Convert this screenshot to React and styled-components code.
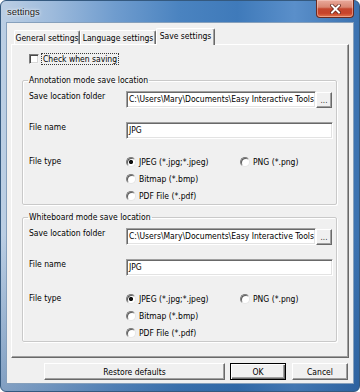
import React from 'react';
import styled, { createGlobalStyle } from 'styled-components';

const UI_FONT = `"DejaVu Sans Condensed", "DejaVu Sans", sans-serif`;

const GlobalStyle = createGlobalStyle`
  html, body {
    margin: 0;
    padding: 0;
    background: #fff;
  }
  body {
    width: 360px;
    height: 392px;
    overflow: hidden;
    font-family: ${UI_FONT};
    font-stretch: condensed;
    font-size: 8.5px;
    color: #000;
  }
`;

// window chrome
const Window = styled.div`
  box-sizing: border-box;
  width: 360px;
  height: 392px;
  display: flex;
  flex-direction: column;
  padding: 0 5px 7px 5px;
  border: 1px solid #34597f;
  border-radius: 6px;
  background:
    linear-gradient(to bottom, rgba(255, 255, 255, 0) 60%, rgba(20, 70, 130, 0.35) 100%),
    linear-gradient(to right, #bccfe4 0%, #9ebbdc 14%, #6f9cce 32%, #4a83c0 50%, #3f7aba 66%, #5a8fca 82%, #3b72b0 100%);
`;

const TitleBar = styled.div`
  height: 21px;
  display: flex;
  align-items: flex-start;
  padding-left: 1px;
`;

const Title = styled.div`
  font-family: "Liberation Sans", Arial, sans-serif;
  font-stretch: normal;
  font-size: 9.5px;
  line-height: 21px;
  color: #1a1a1a;
  text-shadow: 0 0 4px rgba(255, 255, 255, 0.9), 0 0 2px rgba(255, 255, 255, 0.9);
`;

const CloseButton = styled.div`
  box-sizing: border-box;
  margin-left: auto;
  margin-top: -1px;
  width: 38px;
  height: 18px;
  display: flex;
  align-items: center;
  justify-content: center;
  border: 1px solid #6b2a20;
  border-top: none;
  border-radius: 0 0 4px 4px;
  background: linear-gradient(to bottom, #e9aa9c 0%, #d98672 42%, #c4472f 52%, #c8432a 78%, #e2764f 100%);
  box-shadow: inset 0 0 0 1px rgba(255, 220, 210, 0.45);
`;

const Client = styled.div`
  flex: 1;
  display: flex;
  flex-direction: column;
  padding: 5px 4px 3px 4px;
  background: #f0f0f0;
  border: 1px solid #86a0bc;
`;

// tabs
const TabStrip = styled.div`
  height: 16px;
  display: flex;
  align-items: flex-end;
  padding-left: 3px;
`;

const Tab = styled.div`
  box-sizing: border-box;
  width: ${({ $w }) => $w}px;
  height: ${({ $active }) => ($active ? '17px' : '14px')};
  margin-bottom: ${({ $active }) => ($active ? '-1px' : '0')};
  position: relative;
  z-index: ${({ $active }) => ($active ? 2 : 1)};
  display: flex;
  align-items: center;
  justify-content: center;
  padding-bottom: ${({ $active }) => ($active ? '2px' : '0')};
  background: #f0f0f0;
  border: 1px solid #fff;
  border-bottom: none;
  border-right-color: #696969;
  border-radius: 2px 2px 0 0;
  box-shadow: inset -1px 0 0 #a0a0a0;
  white-space: nowrap;
`;

const Panel = styled.div`
  flex: 1;
  display: flex;
  flex-direction: column;
  padding: 8px 1px 0 0;
  background: #f0f0f0;
  border: 1px solid #fff;
  border-right-color: #696969;
  border-bottom-color: #696969;
  box-shadow: inset -1px -1px 0 #a0a0a0;
`;

const CheckRow = styled.label`
  display: flex;
  align-items: center;
  height: 12px;
  margin-left: 17px;
`;

const CheckBox = styled.span`
  box-sizing: border-box;
  width: 10px;
  height: 10px;
  background: #fff;
  border: 1px solid;
  border-color: #7d7d7d #f4f4f4 #f4f4f4 #7d7d7d;
  box-shadow: inset 1px 1px 0 #4a4a4a, inset -1px -1px 0 #d8d8d8;
`;

const FocusLabel = styled.span`
  margin-left: 2px;
  padding: 0 1px;
  line-height: 10px;
  border: 1px dotted #3a3a3a;
`;

// group boxes
const Group = styled.fieldset`
  margin: ${({ $top }) => $top}px 10px 0 10px;
  padding: 5px 3px 2px 6px;
  min-width: 0;
  border: 1px solid #c9c9c9;
  box-shadow: 1px 1px 0 #fff, inset 1px 1px 0 #fff;
  border-radius: 2px;
`;

const Legend = styled.legend`
  padding: 0 1px;
  margin-left: -1px;
  line-height: 11px;
`;

const Row = styled.div`
  display: flex;
  align-items: flex-start;
  margin-top: ${({ $top }) => $top || 0}px;
`;

const Label = styled.div`
  width: 97px;
  flex: none;
  line-height: 11px;
`;

const TextBox = styled.div`
  box-sizing: border-box;
  flex: 1;
  height: 17px;
  padding-left: 2px;
  line-height: 15px;
  white-space: nowrap;
  overflow: hidden;
  background: #fff;
  border: 1px solid;
  border-color: #a0a0a0 #fff #fff #a0a0a0;
  box-shadow: inset 1px 1px 0 #696969, inset -1px -1px 0 #e3e3e3;
`;

const BrowseButton = styled.div`
  box-sizing: border-box;
  width: 16px;
  height: 16px;
  margin-top: 1px;
  margin-right: 1px;
  display: flex;
  align-items: flex-end;
  justify-content: center;
  padding-bottom: 3px;
  font-size: 8px;
  line-height: 6px;
  color: #333;
  background: #f0f0f0;
  border: 1px solid;
  border-color: #fff #696969 #696969 #fff;
  box-shadow: inset -1px -1px 0 #a0a0a0;
`;

const RadioGrid = styled.div`
  display: grid;
  grid-template-columns: 114px auto;
  grid-auto-rows: 12px;
  row-gap: 5px;
`;

const RadioItem = styled.div`
  display: flex;
  align-items: center;
  gap: 3px;
  white-space: nowrap;
  grid-column: ${({ $col }) => $col || 'auto'};
`;

const Radio = styled.span`
  box-sizing: border-box;
  width: 10px;
  height: 10px;
  flex: none;
  border-radius: 50%;
  border: 1px solid;
  border-color: #7a7a7a #e6e6e6 #e6e6e6 #7a7a7a;
  background: radial-gradient(circle at 50% 50%, ${({ $on }) => ($on ? '#111 0, #111 1.8px, #fff 2.4px' : '#fff 0')});
  box-shadow: inset 1px 1px 0 #5c5c5c;
`;

// bottom buttons
const ButtonRow = styled.div`
  display: flex;
  justify-content: flex-end;
  margin-top: 5px;
  padding-right: 1px;
`;

const Button = styled.div`
  box-sizing: border-box;
  width: ${({ $w }) => $w}px;
  height: 17px;
  margin-left: ${({ $gap }) => $gap || 0}px;
  display: flex;
  align-items: center;
  justify-content: center;
  background: #f0f0f0;
  border: 1px solid;
  border-color: ${({ $default }) => ($default ? '#000' : '#fff #696969 #696969 #fff')};
  box-shadow: ${({ $default }) =>
    $default
      ? 'inset 1px 1px 0 #fff, inset -1px -1px 0 #696969, inset -2px -2px 0 #a0a0a0'
      : 'inset -1px -1px 0 #a0a0a0'};
`;

const CloseGlyph = () => (
  <svg width="11" height="10" viewBox="0 0 11 10">
    <path d="M2 1.5 L9 8.5 M9 1.5 L2 8.5" stroke="#5a1c12" strokeWidth="3.4" strokeLinecap="square" />
    <path d="M2 1.5 L9 8.5 M9 1.5 L2 8.5" stroke="#fff" strokeWidth="2" strokeLinecap="square" />
  </svg>
);

const SaveGroup = ({ title, top }) => (
  <Group $top={top}>
    <Legend>{title}</Legend>
    <Row>
      <Label>Save location folder</Label>
      <TextBox>C:\Users\Mary\Documents\Easy Interactive Tools</TextBox>
      <BrowseButton>...</BrowseButton>
    </Row>
    <Row $top={14}>
      <Label>File name</Label>
      <TextBox>JPG</TextBox>
    </Row>
    <Row $top={17}>
      <Label>File type</Label>
      <RadioGrid>
        <RadioItem>
          <Radio $on />
          JPEG (*.jpg;*.jpeg)
        </RadioItem>
        <RadioItem>
          <Radio />
          PNG (*.png)
        </RadioItem>
        <RadioItem $col="1 / 3">
          <Radio />
          Bitmap (*.bmp)
        </RadioItem>
        <RadioItem $col="1 / 3">
          <Radio />
          PDF File (*.pdf)
        </RadioItem>
      </RadioGrid>
    </Row>
  </Group>
);

const App = () => {
  return (
    <React.Fragment>
      <GlobalStyle />
      <Window>
        <TitleBar>
          <Title>settings</Title>
          <CloseButton>
            <CloseGlyph />
          </CloseButton>
        </TitleBar>
        <Client>
          <TabStrip>
            <Tab $w={66}>General settings</Tab>
            <Tab $w={76}>Language settings</Tab>
            <Tab $w={59} $active>
              Save settings
            </Tab>
          </TabStrip>
          <Panel>
            <CheckRow>
              <CheckBox />
              <FocusLabel>Check when saving</FocusLabel>
            </CheckRow>
            <SaveGroup title="Annotation mode save location" top={10} />
            <SaveGroup title="Whiteboard mode save location" top={7} />
          </Panel>
          <ButtonRow>
            <Button $w={181}>Restore defaults</Button>
            <Button $w={56} $gap={5} $default>
              OK
            </Button>
            <Button $w={56} $gap={6}>
              Cancel
            </Button>
          </ButtonRow>
        </Client>
      </Window>
    </React.Fragment>
  );
};

export default App;
